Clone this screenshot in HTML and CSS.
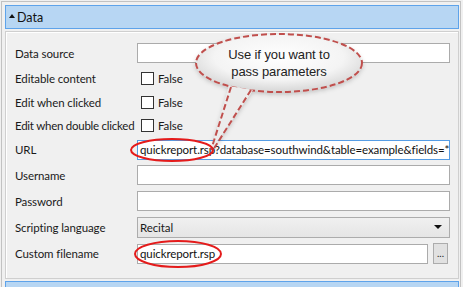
FILE: index.html
```html
<!DOCTYPE html>
<html lang="en">
<head>
  <meta charset="UTF-8" />
  <title>Data properties</title>
  <link rel="stylesheet" href="styles.css">
</head>
<body>
  <div class="window">
    <div class="section-header">
      <span class="caret"></span>Data
    </div>

    <div class="panel">
      <div class="label">Data source</div>
      <div class="field"><div class="textbox"></div></div>

      <div class="label">Editable content</div>
      <div class="field"><span class="checkbox"></span>False</div>

      <div class="label">Edit when clicked</div>
      <div class="field"><span class="checkbox"></span>False</div>

      <div class="label">Edit when double clicked</div>
      <div class="field"><span class="checkbox"></span>False</div>

      <div class="label">URL</div>
      <div class="field"><div class="textbox focused">quickreport.rsp?database=southwind&amp;table=example&amp;fields=*</div></div>

      <div class="label">Username</div>
      <div class="field"><div class="textbox"></div></div>

      <div class="label">Password</div>
      <div class="field"><div class="textbox"></div></div>

      <div class="label">Scripting language</div>
      <div class="field"><div class="combo">Recital<span class="arrow"></span></div></div>

      <div class="label">Custom filename</div>
      <div class="field">
        <div class="textbox short">quickreport.rsp</div>
        <div class="browse">...</div>
      </div>
    </div>

    <div class="section-header next"></div>
  </div>

  <!-- annotations drawn over the form -->
  <svg class="overlay" width="463" height="287" viewBox="0 0 463 287">
    <defs>
      <radialGradient id="bubble" cx="50%" cy="40%" r="60%">
        <stop offset="0%" stop-color="#ffffff"/>
        <stop offset="65%" stop-color="#f4f4f4"/>
        <stop offset="100%" stop-color="#d6d6d6"/>
      </radialGradient>
      <filter id="soft" x="-20%" y="-20%" width="140%" height="150%">
        <feDropShadow dx="0" dy="2" stdDeviation="2" flood-color="#000" flood-opacity="0.18"/>
      </filter>
    </defs>

    <g filter="url(#soft)">
      <ellipse cx="279" cy="63" rx="83" ry="29" fill="url(#bubble)" stroke="#c0504d" stroke-width="2" stroke-dasharray="6 3"/>
      <polygon points="229,86 211,150 253,90" fill="#ececec"/>
      <path d="M231 87 L211 150 M251 90 L213 150" stroke="#c0504d" stroke-width="2" stroke-dasharray="6 3" fill="none"/>
    </g>
    <text class="callout-text" x="279" y="59" text-anchor="middle">Use if you want to</text>
    <text class="callout-text" x="279" y="76" text-anchor="middle">pass parameters</text>

    <ellipse cx="172" cy="150" rx="41" ry="11" fill="none" stroke="#e41b1b" stroke-width="2"/>
    <ellipse cx="178" cy="254" rx="43" ry="13" fill="none" stroke="#e41b1b" stroke-width="2"/>
  </svg>
</body>
</html>
```

FILE: styles.css
```css
body {
  margin: 0;
  width: 463px;
  height: 287px;
  overflow: hidden;
  background: #f0f0f0;
  font-family: Lato, "Noto Sans", sans-serif;
  font-size: 11.5px;
  letter-spacing: -0.1px;
  color: #1a1a1a;
}

.window {
  margin: 1px 0 0 1px;
  width: 454px;
  height: 283px;
  overflow: hidden;
  padding: 3px 1px 0 3px;
  border-top: 1px solid #c2c2c2;
  border-left: 1px solid #c2c2c2;
  border-right: 1px solid #c2c2c2;
}

.section-header {
  box-sizing: border-box;
  height: 24px;
  background: #b7d6f3;
  border: 1px solid #5ea3ea;
  display: flex;
  align-items: center;
  padding-left: 2px;
  font-size: 12.5px;
  letter-spacing: 0;
  color: #111;
}

.section-header.next {
  margin-top: 2px;
}

.caret {
  width: 0;
  height: 0;
  border-left: 3.5px solid transparent;
  border-right: 3.5px solid transparent;
  border-bottom: 4px solid #111;
  margin: 0 2px 3px 1px;
}

.panel {
  margin-top: 2px;
  border: 1px solid #cfcfcf;
  box-shadow: inset 1px 1px 0 #ffffff;
  padding: 8px 0 11px 9px;
  display: grid;
  grid-template-columns: 122px 313px;
  grid-template-rows: 26px 25px 23px 23px 25px 26px 26px 26px 27px;
}

.label {
  display: flex;
  align-items: center;
  white-space: nowrap;
}

.label:nth-child(7) {
  letter-spacing: -0.25px;
}

.field {
  display: flex;
  align-items: center;
  white-space: nowrap;
}

.textbox {
  box-sizing: border-box;
  width: 313px;
  height: 20px;
  background: #fff;
  border: 1px solid #ababab;
  padding: 0 2px;
  line-height: 18px;
  overflow: hidden;
  white-space: nowrap;
  color: #111;
}

.textbox.focused {
  border-color: #569de5;
}

.textbox.short {
  width: 291px;
}

.checkbox {
  box-sizing: border-box;
  width: 13px;
  height: 13px;
  background: #fff;
  border: 1px solid #333;
  margin: 0 4px 0 4px;
}

.combo {
  box-sizing: border-box;
  width: 313px;
  height: 21px;
  border: 1px solid #acacac;
  background: linear-gradient(#f0f0f0, #e5e5e5);
  padding: 0 2px;
  display: flex;
  align-items: center;
  justify-content: space-between;
}

.arrow {
  width: 0;
  height: 0;
  border-left: 4px solid transparent;
  border-right: 4px solid transparent;
  border-top: 4px solid #111;
  margin-right: 5px;
}

.browse {
  box-sizing: border-box;
  width: 15px;
  height: 21px;
  margin-left: 5px;
  border: 1px solid #acacac;
  background: #e1e1e1;
  font-size: 10px;
  line-height: 19px;
  text-align: center;
  color: #222;
}

.overlay {
  position: absolute;
  left: 0;
  top: 0;
  pointer-events: none;
}

.callout-text {
  font-family: "Liberation Sans", Arial, sans-serif;
  font-size: 13px;
  fill: #222;
}
```
